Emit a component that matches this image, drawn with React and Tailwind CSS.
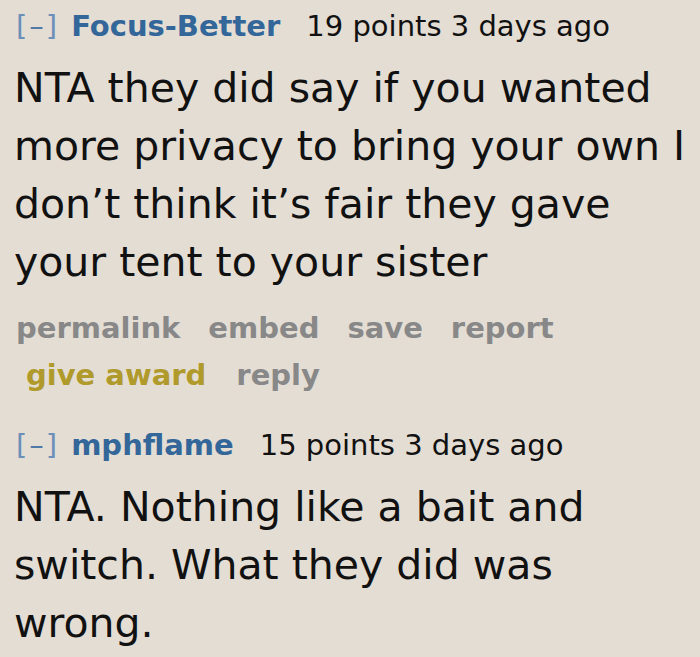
import React from "react";

const comments = [
  {
    id: 1,
    author: "Focus-Better",
    points: 19,
    time: "3 days ago",
    body: "NTA they did say if you wanted more privacy to bring your own I don\u2019t think it\u2019s fair they gave your tent to your sister",
    showActions: true,
  },
  {
    id: 2,
    author: "mphflame",
    points: 15,
    time: "3 days ago",
    body: "NTA. Nothing like a bait and switch. What they did was wrong.",
    showActions: false,
  },
];

const Comment = ({ c }) => (
  <div className="pl-[14px]">
    <div className="flex items-baseline h-[59px] pt-[8px] text-[29px] leading-[36px]">
      <span className="text-[#6b8fb8] font-normal mr-[12px] pl-[2px] tracking-[2px]">
        [<span className="text-[#4f7aa8]">&ndash;</span>]
      </span>
      <span className="text-[#336699] font-bold">{c.author}</span>
      <span className="text-[#111] ml-[26px] text-[29px]">
        {c.points} points {c.time}
      </span>
    </div>
    <p className="text-[#111] text-[41px] leading-[58px] pr-[10px]">{c.body}</p>
    {c.showActions && (
      <div className="pt-[14px] pb-[20px] text-[29px] font-bold leading-[47px] text-[#888]">
        <div className="flex gap-[28px] pl-[2px]">
          <span>permalink</span>
          <span>embed</span>
          <span>save</span>
          <span>report</span>
        </div>
        <div className="flex gap-[30px] pl-[12px]">
          <span className="text-[#b09a2c]">give award</span>
          <span>reply</span>
        </div>
      </div>
    )}
  </div>
);

export default function App() {
  return (
    <div
      className="w-[700px] h-[657px] overflow-hidden bg-[#e4ddd4]"
      style={{ fontFamily: '"DejaVu Sans", Verdana, sans-serif' }}
    >
      {comments.map((c) => (
        <Comment key={c.id} c={c} />
      ))}
    </div>
  );
}
